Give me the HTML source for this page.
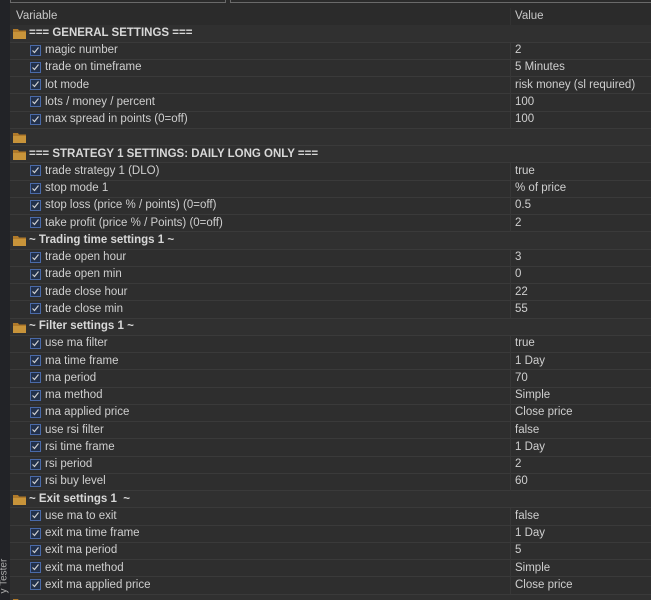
<!DOCTYPE html>
<html><head><meta charset="utf-8"><style>
*{margin:0;padding:0;box-sizing:border-box}
html,body{width:651px;height:600px;overflow:hidden}
body{background:#2b2b2b;font-family:"Liberation Sans",sans-serif;font-size:11.5px;color:#cfcfcf;position:relative}
.strip{position:absolute;left:0;top:0;width:10px;height:600px;background:#222327;z-index:2}
.top1{position:absolute;left:10px;top:-10px;width:216px;height:13px;border:1px solid #6a6a6a;background:#2b2b2b}
.top2{position:absolute;left:230px;top:-10px;width:430px;height:13px;border:1px solid #6a6a6a;background:#2b2b2b}
.hdr{position:absolute;top:10px;font-size:11.5px;color:#c8c8c8}
.vsep{position:absolute;left:510px;top:8px;width:1px;height:18px;background:#333}
.row{position:absolute;left:10px;width:641px;height:17.25px;border-bottom:1px solid #3a3a3a;background:#2e2e2e}
.row.g{background:#303030}
.row .t{position:absolute;left:35px;top:1.5px;white-space:nowrap}
.row.g .t{left:19px;font-weight:bold;color:#d8d8d8}
.row .v{position:absolute;left:505px;top:1.5px;white-space:nowrap}
.row .d{position:absolute;left:500px;top:0;width:1px;height:17px;background:#383838}
.cb{position:absolute;left:20px;top:2px;width:11px;height:11px;border:1px solid #4a6aa8;background:#22304a}
.fd{position:absolute;left:3px;top:3px}
.vt{position:absolute;left:-16px;top:568px;transform:rotate(-90deg);font-size:10px;color:#aaa;width:40px;z-index:3}
</style></head><body>
<div class="strip"></div>
<div class="top1"></div><div class="top2"></div>
<div class="hdr" style="left:16px">Variable</div>
<div class="vsep"></div>
<div class="hdr" style="left:515px">Value</div>
<div id="rows"></div>
<div class="vt">y Tester</div>
<script>
var R=[
['g','=== GENERAL SETTINGS ===',''],
['i','magic number','2'],['i','trade on timeframe','5 Minutes'],['i','lot mode','risk money (sl required)'],['i','lots / money / percent','100'],['i','max spread in points (0=off)','100'],
['g','',''],
['g','=== STRATEGY 1 SETTINGS: DAILY LONG ONLY ===',''],
['i','trade strategy 1 (DLO)','true'],['i','stop mode 1','% of price'],['i','stop loss (price % / points) (0=off)','0.5'],['i','take profit (price % / Points) (0=off)','2'],
['g','~ Trading time settings 1 ~',''],
['i','trade open hour','3'],['i','trade open min','0'],['i','trade close hour','22'],['i','trade close min','55'],
['g','~ Filter settings 1 ~',''],
['i','use ma filter','true'],['i','ma time frame','1 Day'],['i','ma period','70'],['i','ma method','Simple'],['i','ma applied price','Close price'],['i','use rsi filter','false'],['i','rsi time frame','1 Day'],['i','rsi period','2'],['i','rsi buy level','60'],
['g','~ Exit settings 1&nbsp; ~',''],
['i','use ma to exit','false'],['i','exit ma time frame','1 Day'],['i','exit ma period','5'],['i','exit ma method','Simple'],['i','exit ma applied price','Close price'],
['g','','']];
var fold='<svg class="fd" width="13" height="11" viewBox="0 0 13 11"><path d="M0 1h5l1 1.5h7V11H0z" fill="#b07a2a"/><path d="M0 4h13v7H0z" fill="#c8943a"/></svg>';
var chk='<div class="cb"><svg width="9" height="9" viewBox="0 0 9 9" style="position:absolute;left:0;top:0"><path d="M1.5 4.5l2 2 4-5" stroke="#d0d0d0" stroke-width="1.2" fill="none"/></svg></div>';
var h='';
R.forEach(function(r,i){var top=25.4+i*17.25;
h+='<div class="row '+(r[0]=='g'?'g':'')+'" style="top:'+top+'px">'+(r[0]=='g'?fold:chk)+'<span class="t">'+r[1]+'</span>'+(r[0]=='i'?'<span class="d"></span>':'')+'<span class="v">'+r[2]+'</span></div>';});
document.getElementById('rows').innerHTML=h;
</script>
</body></html>
